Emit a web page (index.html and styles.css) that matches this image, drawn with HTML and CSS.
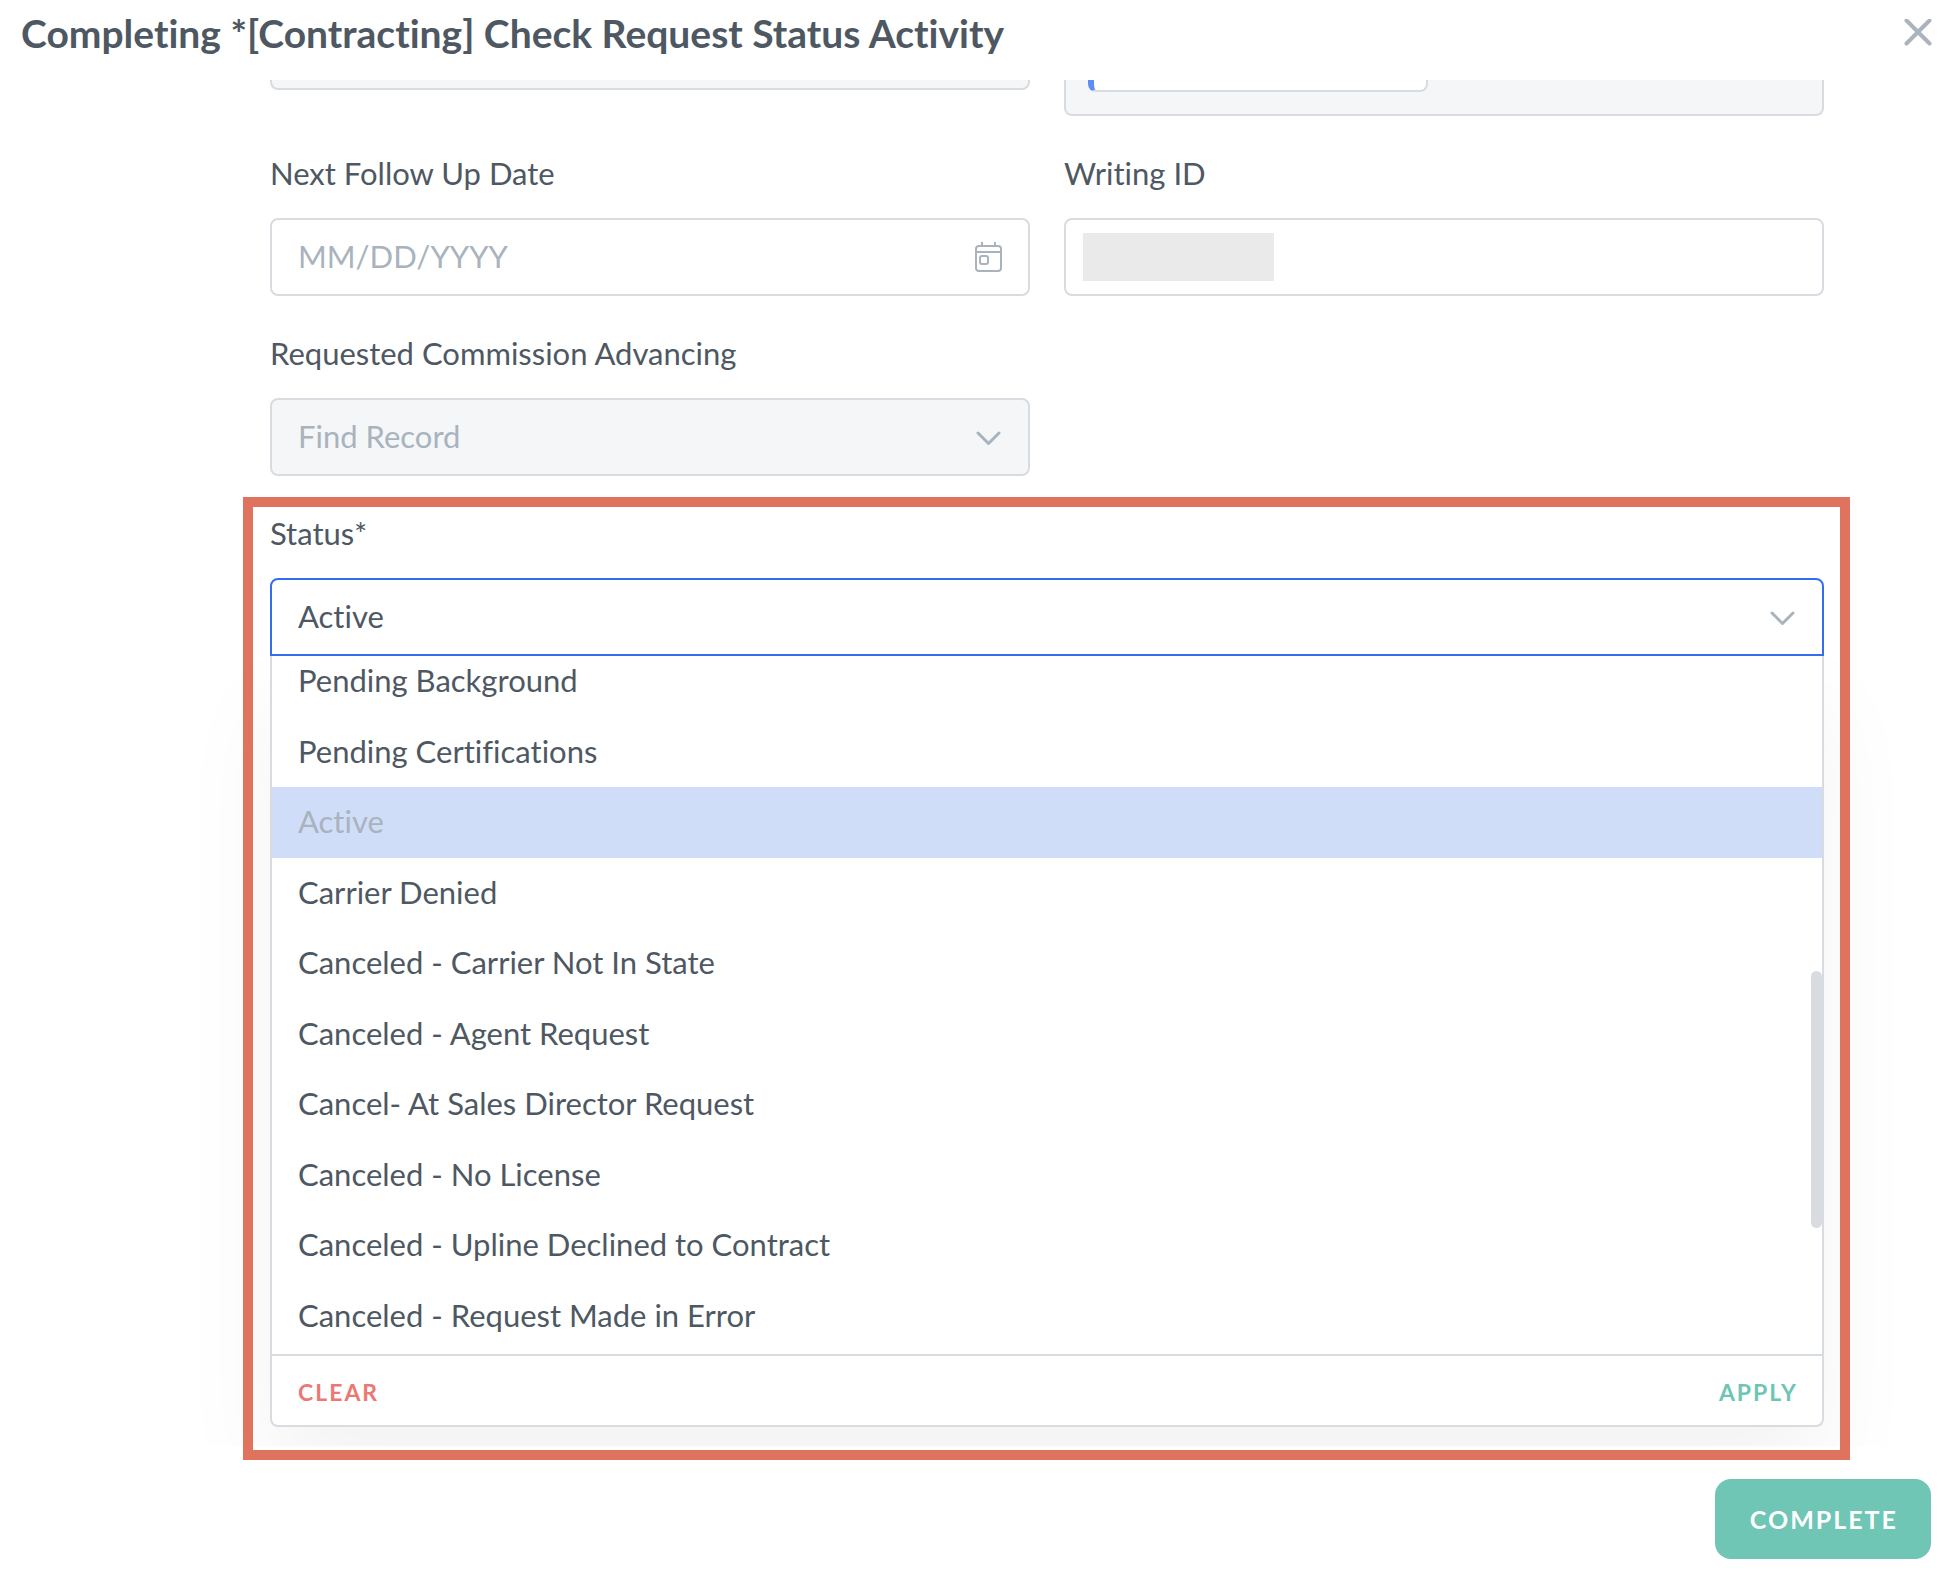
FILE: index.html
```html
<!DOCTYPE html>
<html lang="en">
<head>
    <meta charset="UTF-8">
    <meta name="viewport" content="width=device-width, initial-scale=1.0">
    <title>Complete Activity</title>
    <link rel="stylesheet" href="styles.css">
</head>
<body>
    <div class="header">
        <h1 class="title">Completing *[Contracting] Check Request Status Activity</h1>
        <button class="close" type="button">
            <svg width="28" height="28" viewBox="0 0 28 28"><path d="M2.500 1.500L25.500 24.500M25.500 1.500L2.500 24.500"/></svg>
        </button>
    </div>

    <form class="form">
        <!-- bottom edge of the fields scrolled under the header -->
        <div class="row row-scrolled">
            <div class="field-end"></div>
            <div class="field-end tall">
                <div class="record-card"></div>
            </div>
        </div>

        <div class="row">
            <div class="input-group">
                <label for="followUp">Next Follow Up Date</label>
                <div class="control">
                    <input type="text" id="followUp" placeholder="MM/DD/YYYY">
                    <svg class="icon" width="28" height="32" viewBox="0 0 28 32">
                        <rect x="1" y="5" width="25" height="25" rx="3"/>
                        <path d="M1 11H26M7 1V5M20 1V5"/>
                        <rect x="5" y="15" width="8" height="8" rx="2"/>
                    </svg>
                </div>
            </div>
            <div class="input-group">
                <label for="writingId">Writing ID</label>
                <div class="control">
                    <input type="text" id="writingId">
                    <span class="redacted"></span>
                </div>
            </div>
        </div>

        <div class="row">
            <div class="input-group">
                <label for="commission">Requested Commission Advancing</label>
                <div class="control">
                    <select id="commission" disabled>
                        <option>Find Record</option>
                    </select>
                    <svg class="icon" width="28" height="16" viewBox="0 0 28 16"><path class="chevron" d="M3 4L13.500 14.500L24 4"/></svg>
                </div>
            </div>
        </div>

        <div class="input-group status-group">
            <label for="status">Status*</label>
            <div class="control open">
                <select id="status">
                    <option selected>Active</option>
                </select>
                <svg class="icon" width="28" height="16" viewBox="0 0 28 16"><path class="chevron" d="M3 4L13.500 14.500L24 4"/></svg>
            </div>
            <div class="menu">
                <div class="menu-scroll">
                    <ul class="menu-list" role="listbox">
                        <li role="option">Pending Background</li>
                        <li role="option">Pending Certifications</li>
                        <li role="option" class="selected" aria-selected="true">Active</li>
                        <li role="option">Carrier Denied</li>
                        <li role="option">Canceled - Carrier Not In State</li>
                        <li role="option">Canceled - Agent Request</li>
                        <li role="option">Cancel- At Sales Director Request</li>
                        <li role="option">Canceled - No License</li>
                        <li role="option">Canceled - Upline Declined to Contract</li>
                        <li role="option">Canceled - Request Made in Error</li>
                    </ul>
                    <span class="scroll-thumb"></span>
                </div>
                <div class="menu-footer">
                    <button type="button" class="link-button clear">CLEAR</button>
                    <button type="button" class="link-button apply">APPLY</button>
                </div>
            </div>
        </div>
    </form>

    <div class="footer">
        <button type="button" class="button">COMPLETE</button>
    </div>
</body>
</html>
```

FILE: styles.css
```css
* {
    box-sizing: border-box;
}

body {
    margin: 0;
    background: #fff;
    color: #4e5863;
    font-family: Lato, 'Open Sans', sans-serif;
    font-size: 31px;
    line-height: 36px;
    font-variant-ligatures: none;
}

button, input, select {
    font: inherit;
    color: inherit;
}

button {
    border: none;
    background: none;
    padding: 0;
    cursor: pointer;
}

.header {
    display: flex;
    justify-content: space-between;
    align-items: center;
    height: 80px;
    padding: 0 16px 14px 21px;
}

.title {
    margin: 0;
    font-size: 39px;
    line-height: 48px;
    font-weight: 700;
}

.close {
    display: flex;
}

.close svg {
    fill: none;
    stroke: #aab3be;
    stroke-width: 4;
    stroke-linecap: round;
}

.form {
    padding: 0 124px 0 270px;
}

.row {
    display: grid;
    grid-template-columns: 1fr 1fr;
    column-gap: 34px;
    margin-bottom: 39px;
}

.row-scrolled {
    align-items: start;
}

.field-end {
    height: 10px;
    border: 2px solid #d8dce1;
    border-top: none;
    border-radius: 0 0 8px 8px;
    background: #f4f6f8;
}

.field-end.tall {
    height: 36px;
    padding-left: 22px;
}

.record-card {
    width: 340px;
    height: 12px;
    background: #fff;
    border: 2px solid #d8dce1;
    border-top: none;
    border-left: 6px solid #5c8df6;
    border-radius: 0 0 8px 8px;
}

.input-group label {
    display: block;
    margin-bottom: 27px;
}

.control {
    display: grid;
    align-items: center;
}

.control > * {
    grid-area: 1 / 1;
}

.control input, .control select {
    width: 100%;
    height: 78px;
    padding: 0 26px 3px 26px;
    border: 2px solid #d8dce1;
    border-radius: 8px;
    background: #fff;
    outline: none;
    appearance: none;
}

.control input::placeholder {
    color: #a9b3be;
    opacity: 1;
}

.control select:disabled {
    background: #f4f6f8;
    color: #a9b3be;
    opacity: 1;
}

.control.open select {
    border-color: #366df0;
    border-radius: 8px 8px 0 0;
}

.icon {
    justify-self: end;
    margin-right: 27px;
    pointer-events: none;
    fill: none;
    stroke: #a9b3be;
    stroke-width: 2;
}

.icon .chevron {
    stroke-width: 3;
    stroke-linecap: round;
    stroke-linejoin: round;
}

.redacted {
    width: 191px;
    height: 48px;
    margin-left: 19px;
    background: #eaeaea;
}

/* frame drawn around the status field */
.status-group {
    position: relative;
}

.status-group::after {
    content: "";
    position: absolute;
    inset: -18px -26px -33px -27px;
    border: 10px solid #e0735e;
    pointer-events: none;
}

.menu {
    background: #fff;
    border: 2px solid #d8dce1;
    border-top: none;
    border-radius: 0 0 8px 8px;
    box-shadow: 0 50px 100px rgba(0, 0, 0, 0.05);
    clip-path: inset(0 -100px -19px -100px);
}

.menu-scroll {
    position: relative;
    display: flex;
    flex-direction: column;
    justify-content: flex-end;
    height: 698px;
    padding-bottom: 3px;
    overflow: hidden;
}

.menu-list {
    display: grid;
    grid-template-rows: repeat(10, 1fr);
    flex: none;
    height: 705px;
    margin: 0;
    padding: 0;
    list-style: none;
}

.menu-list li {
    display: flex;
    align-items: center;
    padding: 0 26px 2px 26px;
}

.menu-list .selected {
    background: #d0ddf8;
    color: #a9b3be;
}

.scroll-thumb {
    position: absolute;
    top: 315px;
    right: 0;
    width: 11px;
    height: 257px;
    border-radius: 6px;
    background: #d8dce1;
}

.menu-footer {
    display: flex;
    justify-content: space-between;
    align-items: center;
    height: 71px;
    padding: 2px 24px 0 26px;
    border-top: 2px solid #d8dce1;
}

.link-button {
    font-size: 23px;
    font-weight: 700;
    letter-spacing: 2px;
}

.clear {
    color: #ec7873;
}

.apply {
    color: #6ec5b4;
}

.footer {
    display: flex;
    justify-content: flex-end;
    padding: 52px 17px 17px;
}

.button {
    height: 80px;
    padding: 0 33px 0 35px;
    border-radius: 16px;
    background: #6fc6b5;
    color: #fff;
    font-size: 25px;
    font-weight: 700;
    letter-spacing: 2px;
}
```
